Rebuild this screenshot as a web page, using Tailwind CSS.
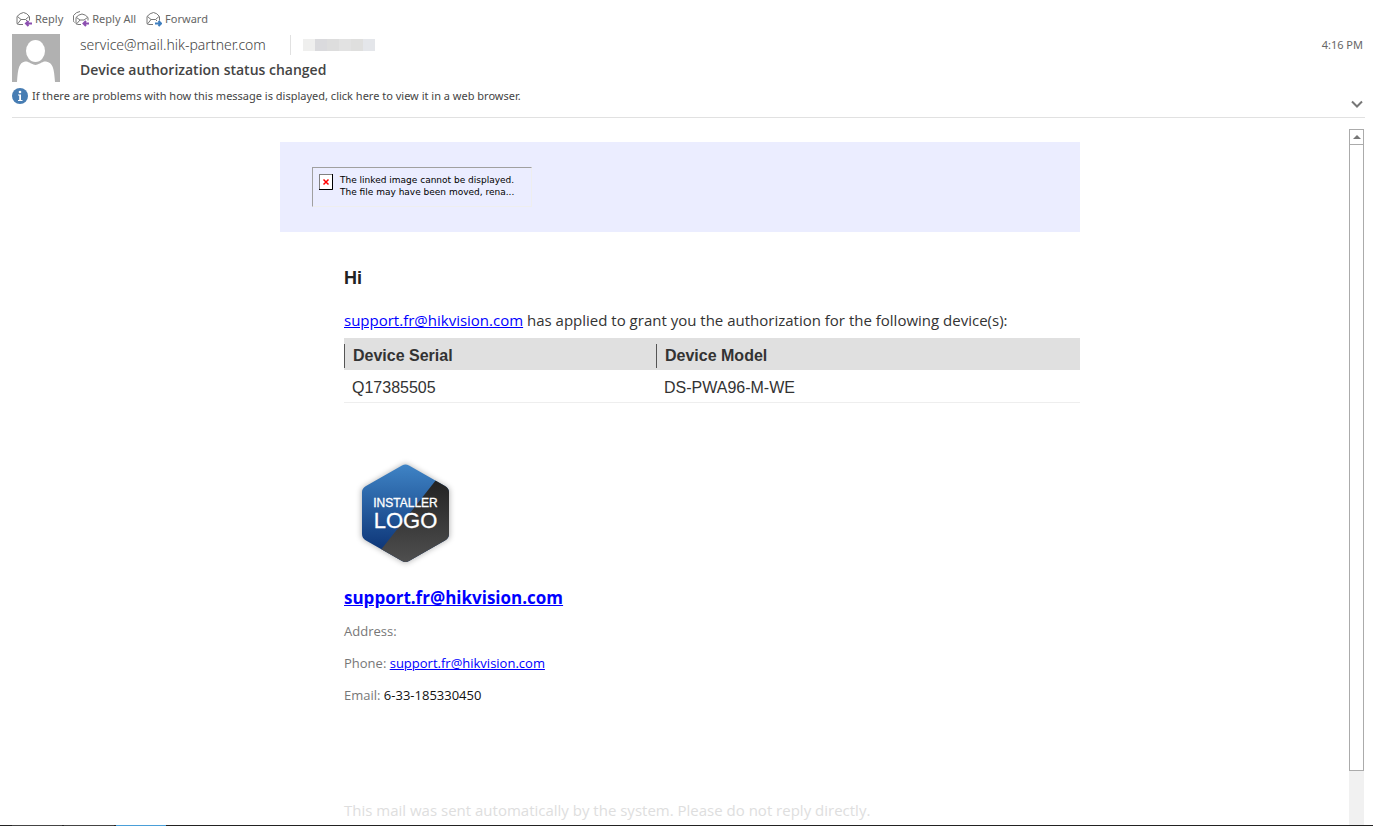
<!DOCTYPE html>
<html lang="en">
<head>
    <meta charset="UTF-8">
    <meta name="viewport" content="width=device-width, initial-scale=1.0">
    <title>Device authorization status changed</title>
    <!-- Tailwind CSS CDN -->
    <script src="https://cdn.jsdelivr.net/npm/@tailwindcss/browser@4"></script>
</head>
<body class="h-screen flex flex-col overflow-hidden bg-white font-['Open_Sans',sans-serif] text-[#444444]">

    <!-- Message header -->
    <header class="ml-3 mr-2 border-b border-[#e1e1e1] pb-[9px] font-['Noto_Sans',sans-serif]">
        <div class="flex items-center gap-[10px] h-[34px] pt-1 pl-1 text-[11px] leading-4 text-[#666666]">
            <button class="flex items-center gap-[3px]">
                <svg class="w-4 h-4" viewBox="0 0 16 16" fill="none">
                    <path d="M7 13.500H2.500Q1 13.500 1 12V5.500Q4 2 7.500 1.500Q11 2 13.500 5.500V9.500M1.500 5.500L5 8.500H9.500L13 5.500M1.500 13L5 8.500M9.500 8.500L11 10" stroke="#777777"/>
                    <path d="M16 12.500H10M12.500 10L10 12.500L12.500 15" stroke="#8c4fb0" stroke-width="2"/>
                </svg>
                Reply
            </button>
            <button class="flex items-center gap-[3px]">
                <svg class="w-4 h-4" viewBox="0 0 16 16" fill="none">
                    <path d="M8 13.500H4.500Q3 13.500 3 12V6.500Q5.500 3.500 9 3Q12.500 3.500 15 6.500V9.500M3.500 6.500L7 9H11L14.500 6.500M3.500 13L7 9M1.500 11.500Q.5 11 .5 9.500V4.500Q3 1 7 .5" stroke="#777777"/>
                    <path d="M16 12.500H11M13 10L10.500 12.500L13 15" stroke="#8c4fb0" stroke-width="2"/>
                </svg>
                Reply All
            </button>
            <button class="flex items-center gap-[3px]">
                <svg class="w-4 h-4" viewBox="0 0 16 16" fill="none">
                    <path d="M7 13.500H2.500Q1 13.500 1 12V5.500Q4 2 7.500 1.500Q11 2 13.500 5.500V9.500M1.500 5.500L5 8.500H9.500L13 5.500M1.500 13L5 8.500M9.500 8.500L11 10" stroke="#777777"/>
                    <path d="M9 12.500H15M12.500 10L15 12.500L12.500 15" stroke="#3f7fbf" stroke-width="2"/>
                </svg>
                Forward
            </button>
        </div>

        <div class="flex">
            <svg class="w-12 h-12 shrink-0" viewBox="0 0 48 48">
                <rect width="48" height="48" fill="#b1b1b1"/>
                <ellipse cx="23.500" cy="17" rx="9.500" ry="11" fill="#ffffff"/>
                <path d="M5 48C6 34 7 29 13 27.500C16 27 17 29 23.500 31C30 29 31 27 34 27.500C41 29 42 34 43 48Z" fill="#ffffff"/>
            </svg>
            <div class="ml-5 flex-1 flex flex-col">
                <div class="flex items-center h-[22px]">
                    <span class="text-[14px] leading-5 font-light">service@mail.hik-partner.com</span>
                    <span class="ml-6 w-px h-5 bg-[#e1e1e1]"></span>
                    <!-- Redacted recipient -->
                    <span class="ml-3 flex h-3">
                        <span class="w-3 bg-[#efefee]"></span>
                        <span class="w-3 bg-[#dadadd]"></span>
                        <span class="w-3 bg-[#dddddd]"></span>
                        <span class="w-3 bg-[#e2e2e2]"></span>
                        <span class="w-3 bg-[#dfdfde]"></span>
                        <span class="w-3 bg-[#e4e6ea]"></span>
                    </span>
                    <time class="ml-auto pr-[2px] text-[11px] leading-4 text-[#666666]">4:16 PM</time>
                </div>
                <h1 class="text-[14px] leading-[28px] font-semibold font-['Open_Sans',sans-serif]">Device authorization status changed</h1>
            </div>
        </div>

        <div class="flex items-center h-6">
            <button class="flex items-center gap-1 text-[11px] leading-4">
                <svg class="w-4 h-4" viewBox="0 0 16 16">
                    <circle cx="8" cy="8" r="8" fill="#477db3"/>
                    <circle cx="8" cy="4" r="1.300" fill="#ffffff"/>
                    <path d="M6 6.500H9V12H10.500V13H6V12H7.200V7.500H6Z" fill="#ffffff"/>
                </svg>
                If there are problems with how this message is displayed, click here to view it in a web browser.
            </button>
            <button class="ml-auto pt-4" aria-label="Expand header">
                <svg class="w-4 h-4" viewBox="0 0 16 16" fill="none">
                    <path d="M3 5.500L8 10.500L13 5.500" stroke="#777777" stroke-width="2"/>
                </svg>
            </button>
        </div>
    </header>

    <!-- Reading pane -->
    <div class="flex-1 min-h-0 flex pl-3 pr-[9px]">
        <main class="flex-1 overflow-hidden pt-6 pr-px">
            <div class="max-w-[800px] mx-auto">
                <div class="bg-[#ebedff] px-8 py-[25px]">
                    <div class="w-[220px] h-10 flex gap-[7px] p-[6px] border border-t-[#a0a0a0] border-l-[#a0a0a0] border-r-[#eeeeee] border-b-[#eeeeee] font-['DejaVu_Sans',sans-serif] text-[9px] leading-3 text-black">
                        <svg class="w-[14px] h-4 shrink-0" viewBox="0 0 14 16">
                            <rect x=".5" y=".5" width="13" height="15" fill="#ffffff" stroke="#808080"/>
                            <path d="M13.500 0V15.500H0" fill="none" stroke="#000000"/>
                            <path d="M4.500 5.500L9.500 10.500M9.500 5.500L4.500 10.500" stroke="#ff0000" stroke-width="1.500"/>
                        </svg>
                        <p class="whitespace-nowrap">The linked image cannot be displayed.<br>The file may have been moved, rena...</p>
                    </div>
                </div>

                <div class="pl-16">
                    <h2 class="mt-8 text-[18px] leading-7 font-bold text-[#222222] font-['Liberation_Sans',sans-serif]">Hi</h2>
                    <p class="mt-4 text-[15px] leading-6 text-[#333333]"><a href="#" class="text-[#0000ff] underline">support.fr@hikvision.com</a> has applied to grant you the authorization for the following device(s):</p>

                    <table class="mt-[6px] w-full table-fixed text-left text-[16px] leading-6 text-[#333333] font-['Liberation_Sans',sans-serif]">
                        <colgroup>
                            <col class="w-[312px]">
                            <col>
                        </colgroup>
                        <thead class="bg-[#e0e0e0]">
                            <tr>
                                <th class="pt-[6px] pb-[2px]"><div class="border-l border-[#555555] pl-2">Device Serial</div></th>
                                <th class="pt-[6px] pb-[2px]"><div class="border-l border-[#555555] pl-2">Device Model</div></th>
                            </tr>
                        </thead>
                        <tbody>
                            <tr class="border-b border-[#eeeeee]">
                                <td class="px-2 pt-[6px] pb-[2px]">Q17385505</td>
                                <td class="px-2 pt-[6px] pb-[2px]">DS-PWA96-M-WE</td>
                            </tr>
                        </tbody>
                    </table>

                    <!-- Installer card -->
                    <svg class="mt-[49px] w-[124px] h-[124px]" viewBox="0 0 124 124" role="img" aria-label="Installer logo">
                        <defs>
                            <linearGradient id="blue" x1="0" y1="0" x2="0" y2="1">
                                <stop offset="0" stop-color="#3f84c6"/>
                                <stop offset="1" stop-color="#062a6c"/>
                            </linearGradient>
                            <linearGradient id="dark" x1="0" y1="0" x2="0" y2="1">
                                <stop offset="0" stop-color="#222222"/>
                                <stop offset="1" stop-color="#505050"/>
                            </linearGradient>
                            <clipPath id="hex">
                                <path d="M58 13.500Q61.500 11.500 65 13.500L101 34Q105 36.500 105 40V82Q105 86 101 88.500L65 109Q61.500 111 58 109L22 88.500Q18 86 18 82V40Q18 36.500 22 34Z"/>
                            </clipPath>
                            <filter id="glow" x="-20%" y="-20%" width="140%" height="140%">
                                <feGaussianBlur stdDeviation="3"/>
                            </filter>
                        </defs>
                        <path d="M61.500 12L105 37V86L61.500 111L18 86V37Z" fill="#000000" opacity=".35" filter="url(#glow)"/>
                        <g clip-path="url(#hex)">
                            <rect x="18" y="12" width="87" height="99" fill="url(#blue)"/>
                            <path d="M92 28L36 99L61 112L106 88V28Z" fill="url(#dark)"/>
                        </g>
                        <g text-anchor="middle" font-family="Liberation Sans, sans-serif" fill="#ffffff" stroke="#ffffff" stroke-width=".3">
                            <text x="61.500" y="55" font-size="12">INSTALLER</text>
                            <text x="61.500" y="76" font-size="22">LOGO</text>
                        </g>
                    </svg>
                    <p class="mt-2 text-[17px] leading-7 font-bold"><a href="#" class="text-[#0000ff] underline">support.fr@hikvision.com</a></p>
                    <div class="mt-[3px] text-[13px] leading-8 text-[#777777]">
                        <p>Address:</p>
                        <p>Phone: <a href="#" class="text-[#0000ff] underline">support.fr@hikvision.com</a></p>
                        <p>Email: <span class="text-[#111111]">6-33-185330450</span></p>
                    </div>
                    <p class="mt-[87px] text-[15px] leading-6 text-[#dedede]">This mail was sent automatically by the system. Please do not reply directly.</p>
                </div>
            </div>
        </main>

        <!-- Scroll bar -->
        <div class="w-[15px] mt-[11px] pb-[54px] flex flex-col bg-[#f1f1f1]">
            <button class="h-4 shrink-0 flex items-center justify-center bg-white border border-[#ababab]" aria-label="Scroll up">
                <svg class="w-2 h-1" viewBox="0 0 8 4"><path d="M0 4L4 0L8 4Z" fill="#777777"/></svg>
            </button>
            <div class="flex-1 -mt-px bg-white border border-[#ababab]"></div>
        </div>
    </div>

    <!-- Taskbar edge -->
    <footer class="h-px shrink-0 flex bg-[#222222]">
        <span class="ml-3 w-[50px] bg-[#444444]"></span>
        <span class="ml-[2px] w-[50px] bg-[#444444]"></span>
        <span class="ml-[2px] w-[50px] bg-[#4a9fd8]"></span>
    </footer>
</body>
</html>
